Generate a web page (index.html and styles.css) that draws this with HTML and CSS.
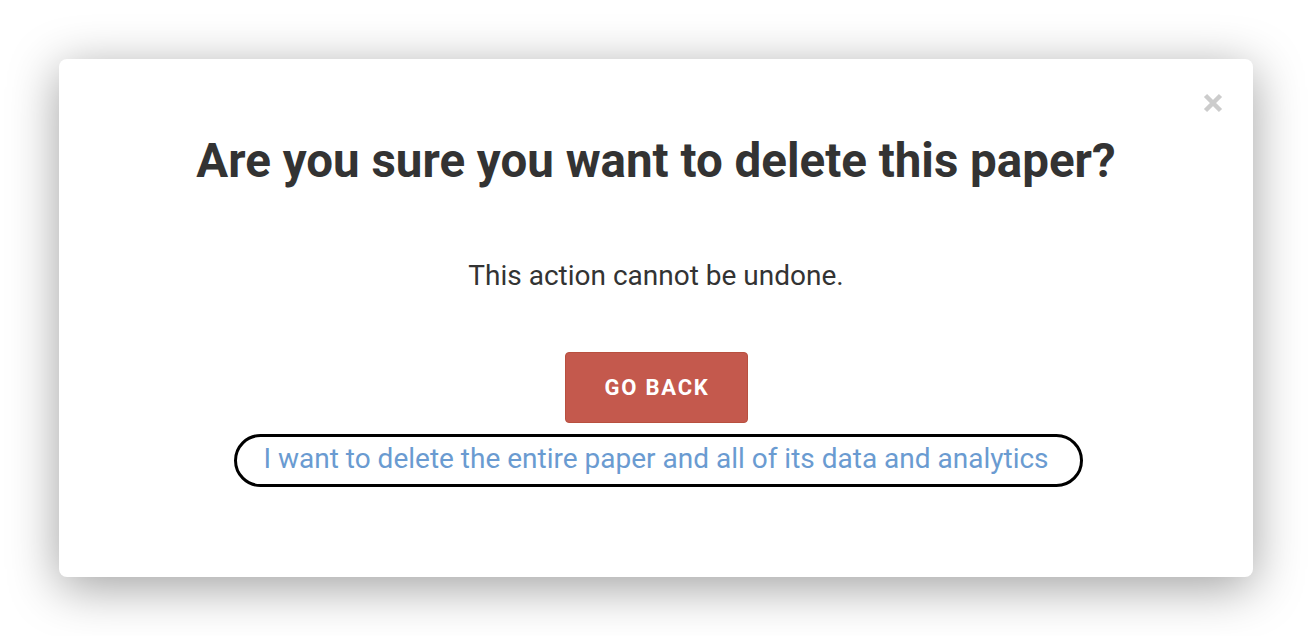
FILE: index.html
```html
<!DOCTYPE html>
<html>
<head>
<meta charset="utf-8">
<link rel="stylesheet" href="styles.css">
</head>
<body>
<div class="page">
  <div class="modal">
    <button class="close" aria-label="Close">
      <svg width="20" height="20" viewBox="0 0 20 20"><path d="M2.5 2.5L17.5 17.5M17.5 2.5L2.5 17.5" stroke="#cccccc" stroke-width="4.5"/></svg>
    </button>
    <h1 class="title">Are you sure you want to delete this paper?</h1>
    <p class="message">This action cannot be undone.</p>
    <button class="go-back">GO BACK</button>
    <a class="delete-link" href="#">I want to delete the entire paper and all of its data and analytics</a>
  </div>
</div>
</body>
</html>
```

FILE: styles.css
```css
html, body {
  margin: 0;
  padding: 0;
  background: #ffffff;
  font-family: Roboto, "Liberation Sans", sans-serif;
}
.page {
  width: 1312px;
  height: 636px;
  padding: 59px 0 0 59px;
  box-sizing: border-box;
}
.modal {
  position: relative;
  width: 1194px;
  height: 518px;
  background: #fff;
  border-radius: 8px;
  box-shadow: 0 10px 50px rgba(0,0,0,0.38);
  display: flex;
  flex-direction: column;
  align-items: center;
  box-sizing: border-box;
  padding-top: 74px;
}
.close {
  position: absolute;
  top: 33px;
  right: 30px;
  border: none;
  background: none;
  padding: 0;
  width: 21px;
  height: 21px;
  display: flex;
  align-items: center;
  justify-content: center;
}
.title {
  margin: 0;
  font-size: 47.5px;
  font-weight: 700;
  color: #333;
  line-height: 56px;
}
.message {
  margin: 70px 0 0;
  font-size: 28px;
  color: #333;
  line-height: 33px;
}
.go-back {
  margin-top: 60px;
  width: 183px;
  height: 71px;
  padding: 0 0 0 2px;
  background: #c4594d;
  border: 1px solid #b8503f;
  border-radius: 4px;
  color: #fff;
  font-family: Roboto, "Liberation Sans", sans-serif;
  font-weight: 700;
  font-size: 22px;
  letter-spacing: 1.8px;
}
.delete-link {
  margin-top: 11px;
  margin-left: 5px;
  width: 849px;
  height: 53px;
  box-sizing: border-box;
  padding: 0 5px 4px 0;
  border: 3px solid #000;
  border-radius: 27px;
  display: flex;
  align-items: center;
  justify-content: center;
  color: #6a9bd1;
  font-size: 28px;
  text-decoration: none;
}
```
